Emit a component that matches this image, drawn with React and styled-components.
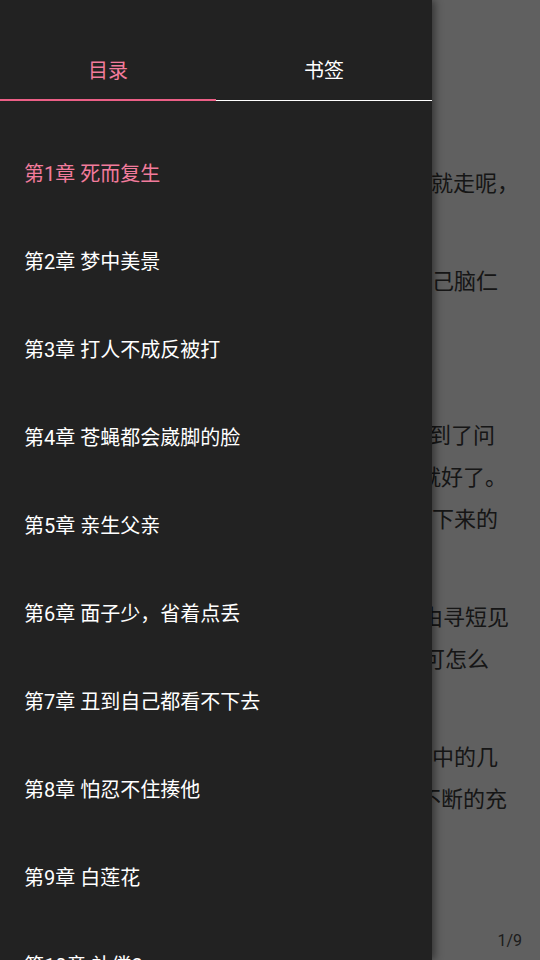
import React from "react";
import styled, { createGlobalStyle } from "styled-components";

const Global = createGlobalStyle`
  html, body { margin: 0; padding: 0; background: #efefef; }
  body { font-family: Roboto, "Noto Sans CJK SC", "Noto Sans", sans-serif; }
  * { box-sizing: border-box; }
`;

const Screen = styled.div`
  position: relative;
  width: 540px;
  height: 960px;
  overflow: hidden;
  background: #efefef;
`;

const Reader = styled.div`
  display: flex;
  flex-direction: column;
  height: 960px;
  padding-top: 160px;
  font-family: "Noto Sans CJK SC", sans-serif;
  font-size: 22px;
  color: #383838;
`;

const Paragraph = styled.div`
  display: flex;
  flex-direction: column;
  margin-top: ${(p) => (p.$first ? 0 : 14)}px;
`;

const Line = styled.div`
  height: 42px;
  line-height: 42px;
  white-space: nowrap;
  padding-left: ${(p) => p.$x ?? 13}px;
`;

const PageNum = styled.div`
  margin-top: auto;
  padding: 0 18px 10px 0;
  text-align: right;
  font-family: Roboto, sans-serif;
  font-size: 16px;
  color: #4a4a4a;
`;

const Dim = styled.div`
  position: absolute;
  inset: 0;
  background: rgba(0, 0, 0, 0.6);
`;

const Drawer = styled.aside`
  position: absolute;
  left: 0;
  top: 0;
  bottom: 0;
  width: 432px;
  background: #222222;
  box-shadow: 3px 0 8px rgba(0, 0, 0, 0.45);
  display: flex;
  flex-direction: column;
`;

const TabBar = styled.div`
  display: flex;
  padding-top: 40px;
  border-bottom: 1px solid #ffffff;
`;

const Tab = styled.div`
  position: relative;
  flex: 1;
  height: 60px;
  padding-bottom: 2px;
  display: flex;
  align-items: center;
  justify-content: center;
  font-size: 20px;
  color: ${(p) => (p.$active ? "#f27b9c" : "#ffffff")};
  &::after {
    content: "";
    display: ${(p) => (p.$active ? "block" : "none")};
    position: absolute;
    left: 0;
    right: 0;
    bottom: -1px;
    height: 2px;
    background: #ec5f86;
  }
`;

const List = styled.div`
  display: flex;
  flex-direction: column;
  padding-top: 28px;
`;

const Chapter = styled.div`
  height: 88px;
  padding: 0 0 2px 24px;
  display: flex;
  align-items: center;
  font-size: 20px;
  color: ${(p) => (p.$active ? "#f27b9c" : "#ffffff")};
  white-space: nowrap;
`;

// hidden part under the drawer (19 chars) + the tail that shows at the right
const mk = (src, tail, x) => ({
  t: Array.from(src).slice(0, 19).join("") + tail,
  x,
});

const paragraphs = [
  [mk("　　怎么还没把话说清楚，人家一言不发地转身", "就走呢，", 13), { t: "真是莫名其妙。" }],
  [mk("　　她揉着太阳穴，只觉得一阵阵地疼，疼得自", "己脑仁", 14), { t: "都快要炸开了。" }],
  [{ t: "　　这到底是怎么回事？" }],
  [
    mk("　　她努力回想着昏迷之前的事情，终于想到了", "到了问", 11),
    mk("题的关键，只要把这件事情弄明白了，一切也都", "就好了。", 1),
    mk("　　可是脑海中残留的记忆，都是原主生前留", "下来的", 14),
    { t: "零碎片段。" },
  ],
  [
    mk("　　原主性子懦弱，受了委屈便只想着寻死，无", "由寻短见", 3),
    mk("，如今她占了这具身子，往后的日子到底该如何", "可怎么", 5),
    { t: "过下去呢？" },
  ],
  [
    mk("　　她深吸一口气，慢慢整理着那些留在脑海", "中的几", 14),
    mk("段记忆，那些陌生的画面在她的脑海里一直都", "不断的充", 1),
    { t: "斥着，让她有些恍惚。" },
  ],
];

const chapters = [
  "第1章 死而复生",
  "第2章 梦中美景",
  "第3章 打人不成反被打",
  "第4章 苍蝇都会崴脚的脸",
  "第5章 亲生父亲",
  "第6章 面子少，省着点丢",
  "第7章 丑到自己都看不下去",
  "第8章 怕忍不住揍他",
  "第9章 白莲花",
  "第10章 补偿2",
];

export default function App() {
  return (
    <>
      <Global />
      <Screen>
        <Reader>
          {paragraphs.map((para, i) => (
            <Paragraph key={i} $first={i === 0}>
              {para.map((l, j) => (
                <Line key={j} $x={l.x}>
                  {l.t}
                </Line>
              ))}
            </Paragraph>
          ))}
          <PageNum>1/9</PageNum>
        </Reader>
        <Dim />
        <Drawer>
          <TabBar>
            <Tab $active>目录</Tab>
            <Tab>书签</Tab>
          </TabBar>
          <List>
            {chapters.map((c, i) => (
              <Chapter key={c} $active={i === 0}>
                {c}
              </Chapter>
            ))}
          </List>
        </Drawer>
      </Screen>
    </>
  );
}
